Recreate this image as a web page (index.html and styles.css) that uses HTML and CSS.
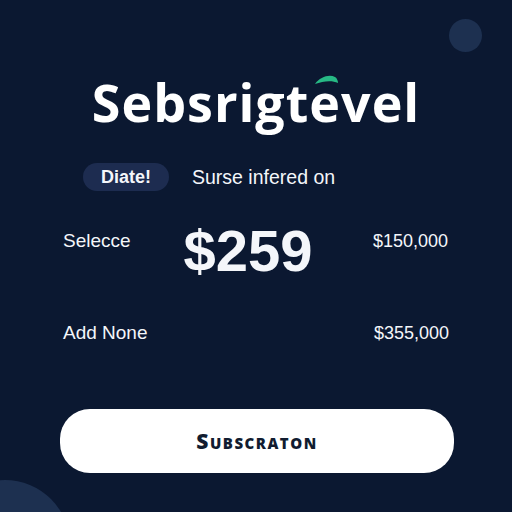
FILE: index.html
```html
<!DOCTYPE html>
<html lang="en">
<head>
    <meta charset="UTF-8">
    <meta name="viewport" content="width=device-width, initial-scale=1.0">
    <title>Sebsrigtevel</title>
    <link rel="stylesheet" href="styles.css">
</head>
<body>
    <div class="page">
        <!-- Background dots -->
        <span class="dot dot-top"></span>
        <span class="dot dot-bottom"></span>

        <h1 class="brand">Sebsrigt<span class="accent-e">e<svg class="leaf" viewBox="0 0 24 10" width="24" height="10"><path d="M0 9 C5 2 14 -1 20 2 C22 3 23 6 23 8 C17 5 8 6 0 9 Z" fill="#27b985"/></svg></span>vel</h1>

        <div class="tagline">
            <span class="pill">Diate!</span>
            <span class="tagline-text">Surse infered on</span>
        </div>

        <!-- Price rows -->
        <div class="row price-row">
            <span class="row-label">Selecce</span>
            <span class="price">$259</span>
            <span class="row-value">$150,000</span>
        </div>

        <div class="row addon-row">
            <span class="row-label">Add None</span>
            <span class="row-value">$355,000</span>
        </div>

        <button class="subscribe-btn">Subscraton</button>
    </div>
</body>
</html>
```

FILE: styles.css
```css
* {
    box-sizing: border-box;
}

html, body {
    margin: 0;
    width: 512px;
    height: 512px;
    overflow: hidden;
    background-color: #0b1831;
    font-family: "Liberation Sans", Arial, sans-serif;
    color: #f4f6fa;
}

.page {
    position: relative;
    width: 512px;
    height: 512px;
    overflow: hidden;
    padding: 72px 63px 0 63px;
    display: flex;
    flex-direction: column;
}

/* Decorative circles */
.dot {
    position: absolute;
    border-radius: 50%;
    background-color: #1d3050;
}

.dot-top {
    width: 33px;
    height: 33px;
    left: 449px;
    top: 19px;
}

.dot-bottom {
    width: 130px;
    height: 130px;
    left: -60px;
    top: 480px;
}

/* Brand title */
.brand {
    margin: 0;
    text-align: center;
    font-family: "Open Sans", sans-serif;
    font-weight: 700;
    font-size: 52px;
    line-height: 60px;
    letter-spacing: 1px;
    color: #ffffff;
}

.accent-e {
    position: relative;
}

.leaf {
    position: absolute;
    left: 6px;
    top: 9px;
}

/* Tagline */
.tagline {
    display: flex;
    align-items: center;
    gap: 23px;
    margin-top: 31px;
    margin-left: 20px;
}

.pill {
    background-color: #1d2c50;
    border-radius: 14px;
    padding: 4px 18px;
    font-weight: 700;
    font-size: 18px;
    line-height: 20px;
}

.tagline-text {
    font-size: 19.5px;
}

/* Rows */
.row {
    display: flex;
    align-items: flex-start;
    justify-content: space-between;
}

.price-row {
    margin-top: 31px;
}

.row-label {
    font-size: 19px;
    line-height: 22px;
}

.price-row .row-label,
.price-row .row-value {
    margin-top: 8px;
    width: 76px;
}

.row-value {
    font-size: 18px;
    line-height: 22px;
}

.price {
    font-weight: 700;
    font-size: 58px;
    line-height: 58px;
    margin-right: 16px;
}

.addon-row {
    margin-top: 42px;
}

/* Button */
.subscribe-btn {
    margin: 65px -5px 0 -3px;
    height: 64px;
    border: none;
    border-radius: 30px;
    background-color: #ffffff;
    color: #111c30;
    font-family: "Open Sans", sans-serif;
    font-weight: 800;
    font-size: 21px;
    font-variant: small-caps;
    text-transform: lowercase;
    letter-spacing: 1.5px;
    cursor: pointer;
}

.subscribe-btn::first-letter {
    text-transform: uppercase;
}
```
